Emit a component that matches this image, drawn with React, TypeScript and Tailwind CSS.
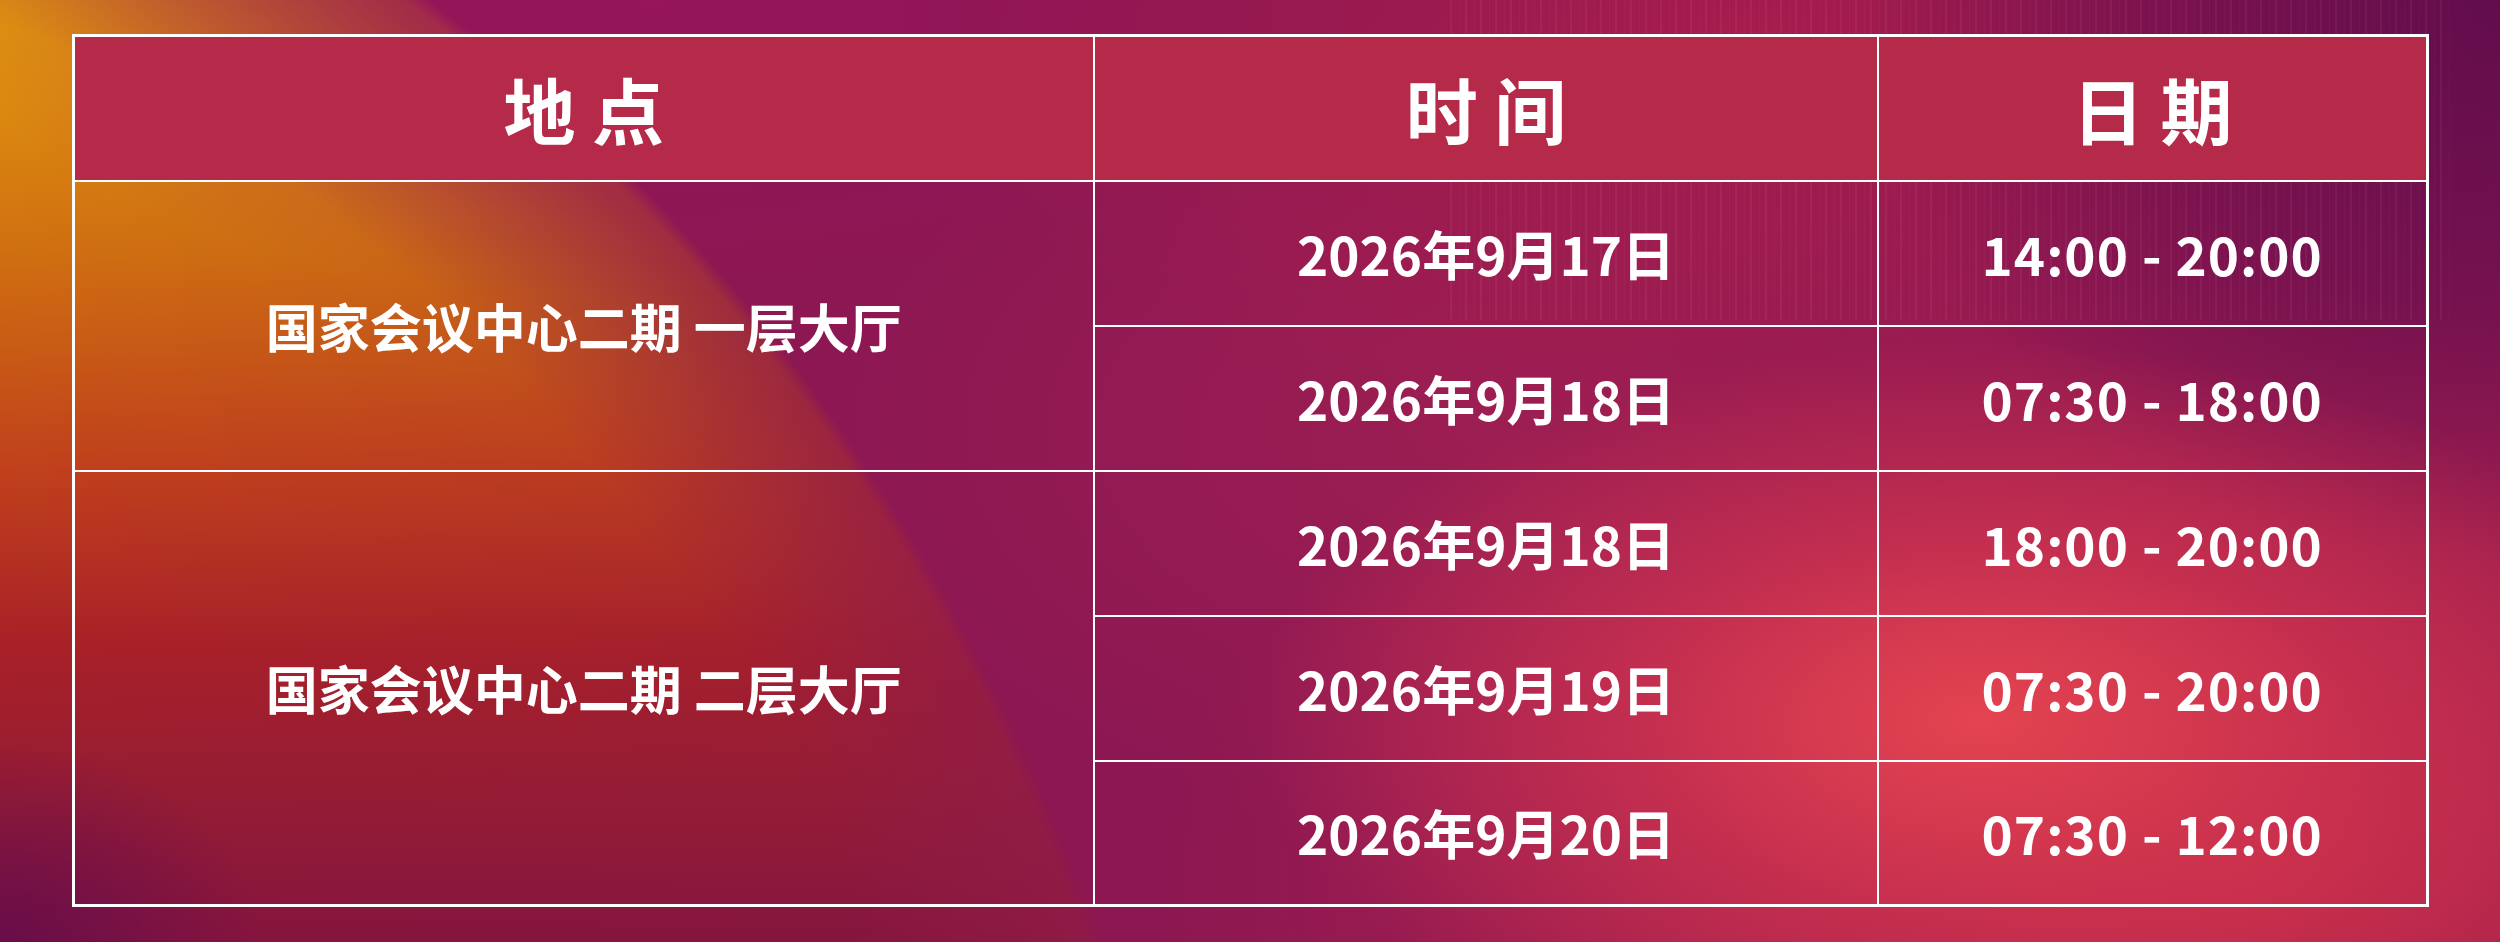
const rows = [
  { place: "国家会议中心二期 一层大厅", slots: [["2026年9月17日", "14:00 - 20:00"], ["2026年9月18日", "07:30 - 18:00"]] },
  {
    place: "国家会议中心二期 二层大厅",
    slots: [
      ["2026年9月18日", "18:00 - 20:00"],
      ["2026年9月19日", "07:30 - 20:00"],
      ["2026年9月20日", "07:30 - 12:00"],
    ],
  },
];

const cell = "border-2 border-white h-[145px] p-0 text-center align-middle";

export default function App() {
  return (
    <div className="min-h-screen w-full flex justify-center pt-[34px] font-['Noto_Sans_CJK_SC',sans-serif] text-white [background:repeating-linear-gradient(90deg,rgba(255,190,220,0.06)_0px,rgba(255,190,220,0.06)_2px,transparent_2px,transparent_9px,rgba(255,190,220,0.03)_9px,rgba(255,190,220,0.03)_10px,transparent_10px,transparent_15px)_1450px_0px/1000px_320px_no-repeat,radial-gradient(ellipse_720px_380px_at_1980px_720px,rgba(228,68,80,1),rgba(215,55,80,0.6)_50%,transparent_100%),radial-gradient(ellipse_650px_560px_at_2500px_0px,rgba(96,12,76,0.95),rgba(96,12,76,0.5)_55%,transparent_100%),radial-gradient(ellipse_800px_420px_at_1750px_40px,rgba(175,30,75,0.75),transparent_100%),radial-gradient(ellipse_700px_420px_at_1500px_430px,rgba(170,36,82,0.55),transparent_100%),radial-gradient(ellipse_1100px_600px_at_2250px_880px,rgba(192,42,72,0.95),transparent_100%),radial-gradient(ellipse_700px_300px_at_650px_0px,rgba(160,20,100,0.5),transparent_100%),radial-gradient(ellipse_1728px_2017px_at_-500px_1700px,transparent_99.2%,#8c1752_100%),radial-gradient(ellipse_260px_200px_at_0px_942px,rgba(100,12,76,0.85),transparent_100%),radial-gradient(ellipse_1728px_2017px_at_-500px_1700px,transparent_88%,rgba(145,28,72,0.75)_99.2%,rgba(145,28,72,0.75)_100%),linear-gradient(90deg,transparent_0px,rgba(140,28,72,0.2)_1100px),linear-gradient(180deg,#e0940f_0px,#dc8a10_100px,#d07010_250px,#c0401c_470px,#a82028_650px,#951c34_800px,#84143e_942px)]">
      <div>
        <table className="table-fixed border-collapse border-[3px] border-white w-[2354px]">
          <thead>
            <tr className="bg-[#b52949]">
              <th className={`${cell} w-[1021px] text-[72px] font-bold leading-none`}>地 点</th>
              <th className={`${cell} w-[784px] text-[72px] font-bold leading-none`}>时 间</th>
              <th className={`${cell} w-[549px] text-[72px] font-bold leading-none`}>日 期</th>
            </tr>
          </thead>
          <tbody>
            {rows.map((group) =>
              group.slots.map(([date, time], i) => (
                <tr key={group.place + date + time}>
                  {i === 0 && (
                    <td rowSpan={group.slots.length} className={`${cell} text-[52px] font-bold leading-none`}>
                      {group.place}
                    </td>
                  )}
                  <td className={`${cell} text-[53px] font-bold leading-none`}>{date}</td>
                  <td className={`${cell} text-[53px] font-bold leading-none tracking-[1px]`}>{time}</td>
                </tr>
              ))
            )}
          </tbody>
        </table>
      </div>
    </div>
  );
}
